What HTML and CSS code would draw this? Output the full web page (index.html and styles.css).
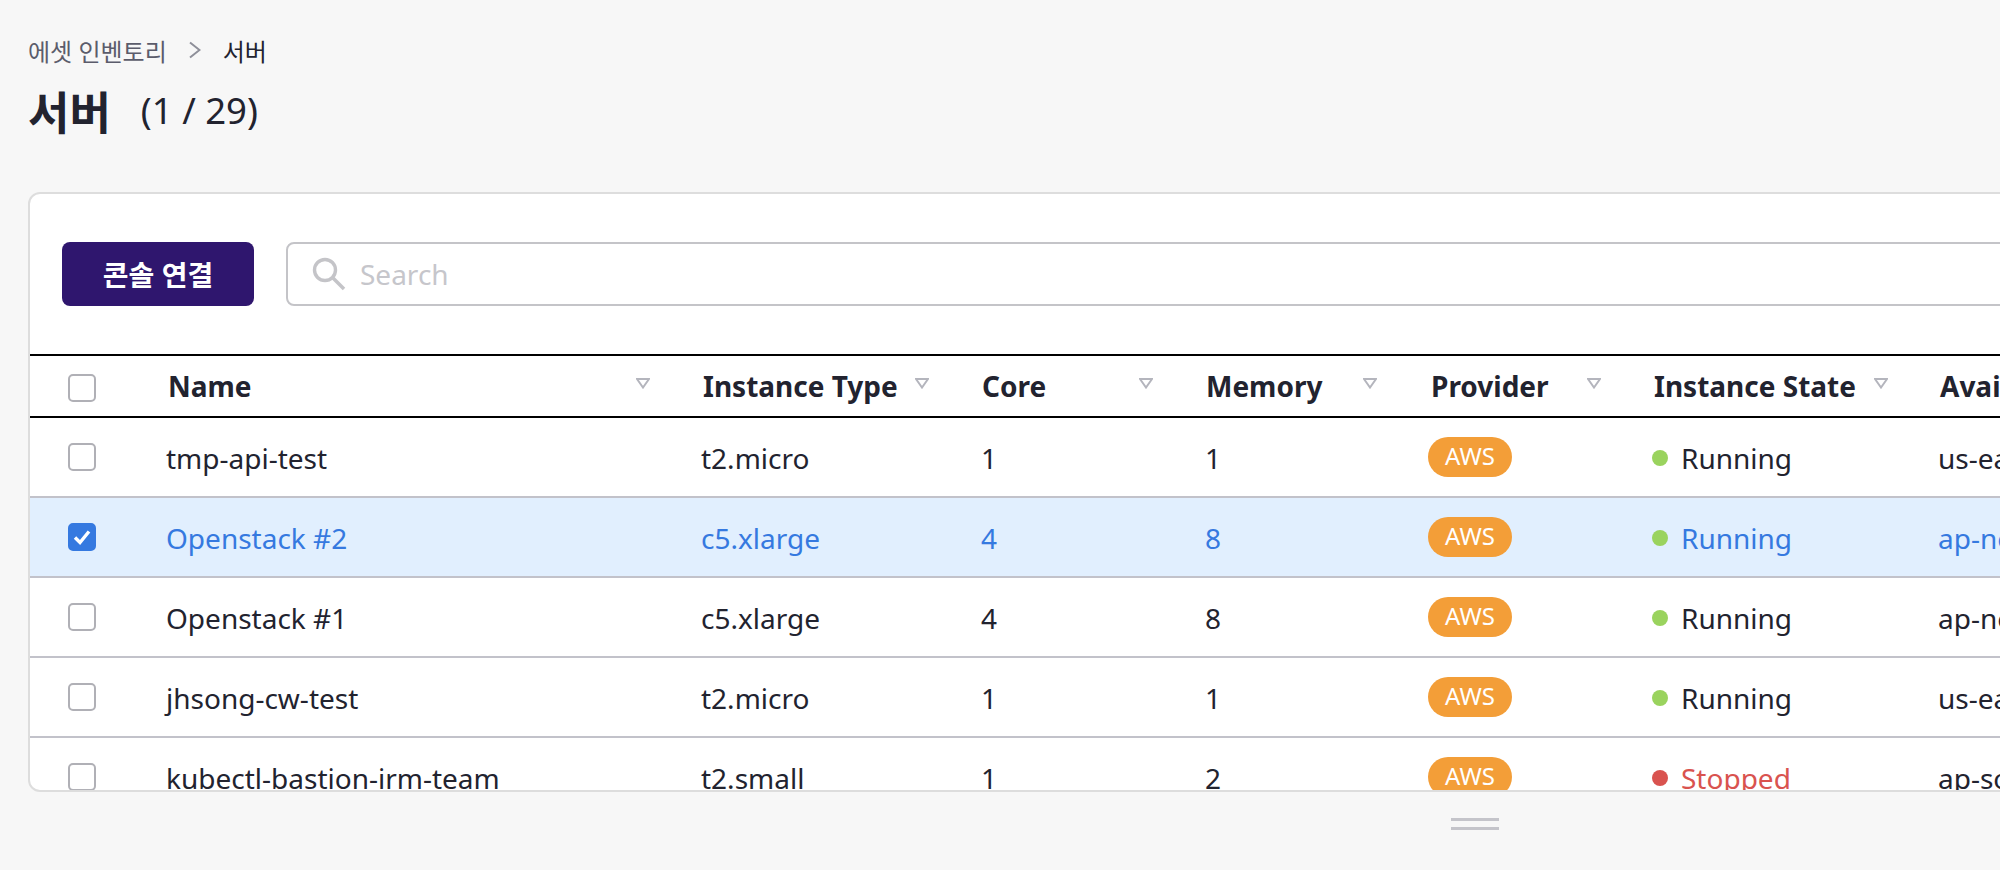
FILE: index.html
```html
<!DOCTYPE html>
<html lang="ko">
<head>
<meta charset="utf-8">
<title>서버</title>
<link rel="stylesheet" href="styles.css">
</head>
<body>
<main class="page">
  <nav class="crumbs"><span class="crumb">에셋 인벤토리</span>
    <svg class="crumb-sep" width="12" height="18" viewBox="0 0 12 18"><path d="M1 1.500l9.500 7.500-9.500 7.500" fill="none" stroke="#8e8f99" stroke-width="2"/></svg>
    <span class="crumb-current">서버</span></nav>
  <h1 class="title"><span class="title-main">서버</span><span class="title-count">(1 / 29)</span></h1>
  <section class="card">
    <div class="toolbar">
      <button class="btn">콘솔 연결</button>
      <div class="search">
        <svg class="search-icon" width="34" height="34" viewBox="0 0 34 34"><circle cx="13" cy="13" r="10.500" fill="none" stroke="#c4c4c8" stroke-width="3.400"/><path d="M20.500 20.500l11.500 11.500" fill="none" stroke="#c4c4c8" stroke-width="3.600"/></svg>
        <span class="placeholder">Search</span>
      </div>
    </div>
    <div class="table">
      <div class="row head">
        <div class="cell"><span class="check"></span></div>
        <div class="cell narrow"><b>Name</b><svg class="sort" width="14" height="11" viewBox="0 0 14 11"><path d="M1 1h12L7 9.500z" fill="none" stroke="#b4b5bd" stroke-width="2"/></svg></div>
        <div class="cell"><b>Instance Type</b><svg class="sort" width="14" height="11" viewBox="0 0 14 11"><path d="M1 1h12L7 9.500z" fill="none" stroke="#b4b5bd" stroke-width="2"/></svg></div>
        <div class="cell flush"><b>Core</b><svg class="sort" width="14" height="11" viewBox="0 0 14 11"><path d="M1 1h12L7 9.500z" fill="none" stroke="#b4b5bd" stroke-width="2"/></svg></div>
        <div class="cell flush narrow"><b>Memory</b><svg class="sort" width="14" height="11" viewBox="0 0 14 11"><path d="M1 1h12L7 9.500z" fill="none" stroke="#b4b5bd" stroke-width="2"/></svg></div>
        <div class="cell narrow shift"><b>Provider</b><svg class="sort" width="14" height="11" viewBox="0 0 14 11"><path d="M1 1h12L7 9.500z" fill="none" stroke="#b4b5bd" stroke-width="2"/></svg></div>
        <div class="cell tight"><b>Instance State</b><svg class="sort" width="14" height="11" viewBox="0 0 14 11"><path d="M1 1h12L7 9.500z" fill="none" stroke="#b4b5bd" stroke-width="2"/></svg></div>
        <div class="cell"><b>Availability Zone</b></div>
      </div>
      <div class="row">
        <div class="cell"><span class="check"></span></div>
        <div class="cell text">tmp-api-test</div><div class="cell text">t2.micro</div><div class="cell text">1</div><div class="cell text">1</div>
        <div class="cell"><span class="pill">AWS</span></div>
        <div class="cell text"><span class="dot"></span>Running</div>
        <div class="cell text">us-east-1a</div>
      </div>
      <div class="row selected">
        <div class="cell"><span class="check checked"><svg width="20" height="18" viewBox="0 0 20 18"><path d="M3 9.500l5 5 9-11" fill="none" stroke="#fff" stroke-width="3.400"/></svg></span></div>
        <div class="cell text">Openstack #2</div><div class="cell text">c5.xlarge</div><div class="cell text">4</div><div class="cell text">8</div>
        <div class="cell"><span class="pill">AWS</span></div>
        <div class="cell text"><span class="dot"></span>Running</div>
        <div class="cell text">ap-northeast-2a</div>
      </div>
      <div class="row">
        <div class="cell"><span class="check"></span></div>
        <div class="cell text">Openstack #1</div><div class="cell text">c5.xlarge</div><div class="cell text">4</div><div class="cell text">8</div>
        <div class="cell"><span class="pill">AWS</span></div>
        <div class="cell text"><span class="dot"></span>Running</div>
        <div class="cell text">ap-northeast-2a</div>
      </div>
      <div class="row">
        <div class="cell"><span class="check"></span></div>
        <div class="cell text">jhsong-cw-test</div><div class="cell text">t2.micro</div><div class="cell text">1</div><div class="cell text">1</div>
        <div class="cell"><span class="pill">AWS</span></div>
        <div class="cell text"><span class="dot"></span>Running</div>
        <div class="cell text">us-east-1a</div>
      </div>
      <div class="row">
        <div class="cell"><span class="check"></span></div>
        <div class="cell text">kubectl-bastion-irm-team</div><div class="cell text">t2.small</div><div class="cell text">1</div><div class="cell text">2</div>
        <div class="cell"><span class="pill">AWS</span></div>
        <div class="cell text stopped"><span class="dot"></span>Stopped</div>
        <div class="cell text">ap-south-1a</div>
      </div>
    </div>
  </section>
  <div class="grip"></div>
</main>
</body>
</html>
```
FILE: styles.css
```css
* { box-sizing: border-box; }
html, body { margin: 0; height: 100%; overflow: hidden; }
body { background: #f7f7f7; color: #22232f; font-family: "Noto Sans", "Noto Sans CJK KR", sans-serif; font-size: 28px; }
.page { width: 2040px; padding: 34px 0 0 28px; }
.crumbs { display: flex; align-items: center; height: 32px; font-size: 24px; }
.crumb { color: #5b5c6b; }
.crumb-sep { margin: 0 22px 0 22px; }
.crumb-current { color: #22232f; }
.title { display: flex; align-items: center; height: 56px; margin: 16px 0 0; font-size: 45px; font-weight: 700; }
.title-count { margin-left: 30px; font-size: 36.500px; font-weight: 400; }
.card { height: 600px; margin-top: 54px; background: #fff; border: 2px solid #ddd; border-radius: 12px; overflow: hidden; }
.toolbar { display: flex; gap: 32px; padding: 48px 0 0 32px; height: 160px; }
.btn { width: 192px; height: 64px; background: #2f166e; border: 0; border-radius: 8px; color: #fff; font: inherit; font-size: 28px; font-weight: 700; padding: 0; }
.search { display: flex; align-items: center; flex: 1; height: 64px; border: 2px solid #c4c4c8; border-radius: 8px; padding-left: 24px; }
.search-icon { margin-right: 14px; }
.placeholder { color: #c6c6cb; font-size: 28px; }
.table { border-top: 2px solid #000; }
.row { display: grid; grid-template-columns: 136px 535px 280px 224px 223px 224px 286px 300px; height: 80px; border-bottom: 2px solid #c2c2ca; align-items: center; }
.row.head { height: 62px; border-bottom-color: #000; }
.row.selected { background: #e1effe; color: #3579e0; }
.cell { display: flex; align-items: center; white-space: nowrap; min-width: 0; }
.cell.text { padding-top: 2px; }
.cell:first-child { padding-left: 38px; }
.head .cell { justify-content: space-between; padding-left: 2px; padding-right: 52px; }
.head .cell.flush { padding-left: 1px; }
.head .cell.shift { padding-left: 3px; }
.head .cell.narrow { padding-right: 51px; }
.head .cell.tight { padding-right: 50px; }
.head .cell:first-child { padding-left: 38px; padding-right: 0; margin-top: 4px; }
.sort { align-self: flex-start; margin-top: 11px; }
.check { display: block; width: 28px; height: 28px; background: #fff; border: 2px solid #b0b0b6; border-radius: 5px; }
.check.checked { display: flex; align-items: center; justify-content: center; background: #3579e0; border-color: #3579e0; }
.pill { display: block; width: 84px; height: 40px; background: #f39e38; border-radius: 20px; color: #fff; font-size: 24px; line-height: 38px; text-align: center; }
.dot { width: 16px; height: 16px; margin: -1px 13px 0 0; background: #9ad35e; border-radius: 50%; }
.stopped { color: #d9534f; }
.stopped .dot { background: #d9534f; }
.grip { width: 48px; height: 12px; margin: 26px 0 0 1423px; border-top: 3px solid #c4c4ca; border-bottom: 3px solid #c4c4ca; }
```
